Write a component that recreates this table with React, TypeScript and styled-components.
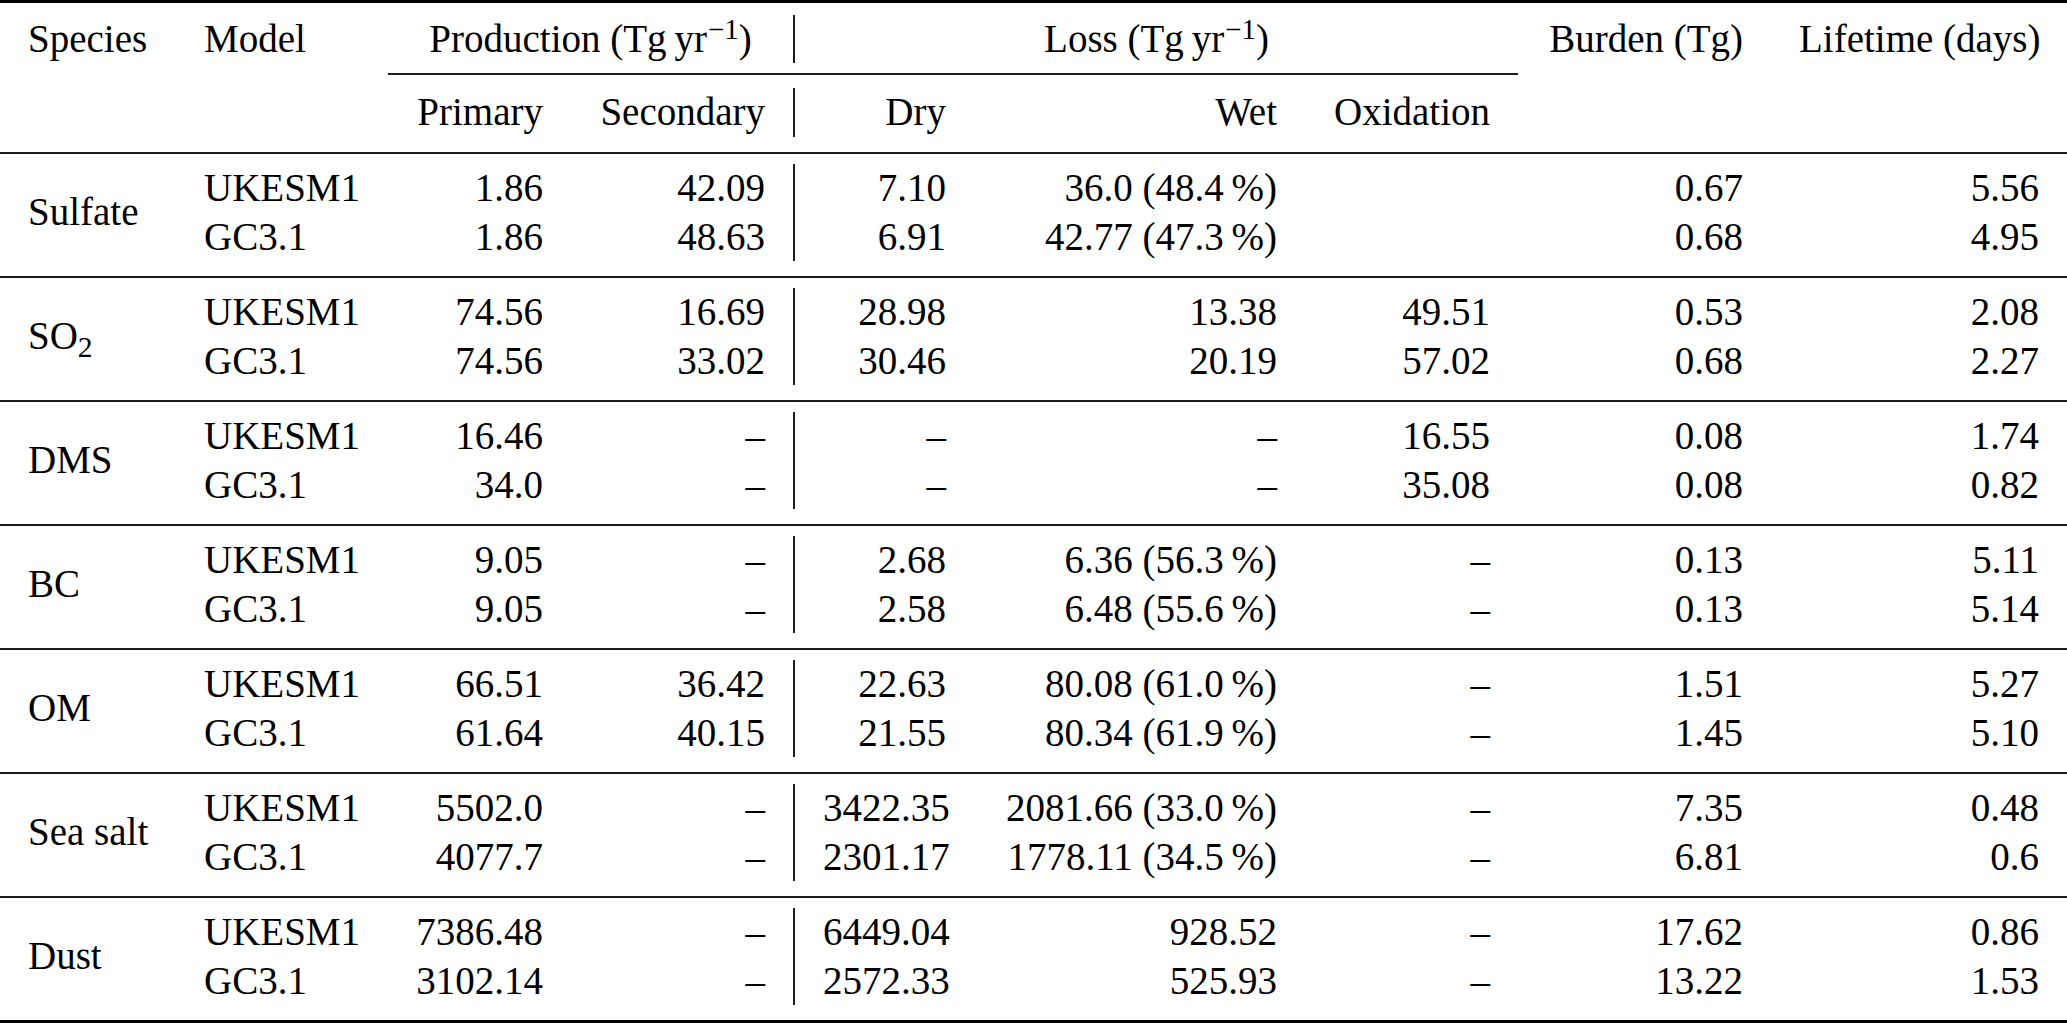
import React from 'react';
import styled, { createGlobalStyle } from 'styled-components';

const COLS = '176px 212px 183px 222px 181px 331px 213px 253px 296px';
const LINE = '48.6px';
const RULE = '#1c1c1c';
const SERIF = `'Liberation Serif', 'Times New Roman', serif`;

const GlobalStyle = createGlobalStyle`
  html, body {
    margin: 0;
    padding: 0;
    background: #fff;
  }
  body {
    font-family: ${SERIF};
    color: #000;
  }
`;

const Table = styled.div`
  width: 2067px;
  font-family: ${SERIF};
  font-size: 39px;
  line-height: ${LINE};
  border-bottom: 3px solid #000;
`;

const Head = styled.div`
  display: grid;
  grid-template-columns: ${COLS};
  grid-template-rows: ${LINE} 25.4px ${LINE};
  padding: 11.5px 0 15px;
  border-top: 3px solid #000;
`;

type Align = 'left' | 'right' | 'center';

const HeadCell = styled.div<{ $col: string; $row: number; $align?: Align; $bar?: boolean }>`
  grid-column: ${(p) => p.$col};
  grid-row: ${(p) => p.$row};
  padding: 0 28px;
  white-space: nowrap;
  text-align: ${(p) => p.$align || 'left'};
  border-left: ${(p) => (p.$bar ? `2px solid ${RULE}` : 'none')};
`;

const CmidRule = styled.div`
  grid-column: 3 / 8;
  grid-row: 2;
  align-self: start;
  margin-top: 10px;
  height: 2px;
  background: ${RULE};
`;

const Group = styled.div`
  display: grid;
  grid-template-columns: ${COLS};
  grid-template-rows: ${LINE} ${LINE};
  padding: 10px 0 14.8px;
  border-top: 2px solid ${RULE};
`;

const Species = styled.div`
  grid-column: 1;
  grid-row: 1 / 3;
  align-self: center;
  padding: 0 28px;
  white-space: nowrap;
`;

const Cell = styled.div<{ $align?: Align; $bar?: boolean }>`
  padding: 0 28px;
  white-space: nowrap;
  text-align: ${(p) => p.$align || 'right'};
  border-left: ${(p) => (p.$bar ? `2px solid ${RULE}` : 'none')};
`;

const Sup = styled.sup`
  font-size: 0.74em;
  line-height: 0;
  vertical-align: 0.42em;
  margin-left: 1px;
`;

const Sub = styled.sub`
  font-size: 0.76em;
  line-height: 0;
  vertical-align: -0.27em;
`;

const perYear = (
  <>
    (Tg{'\u2009'}yr<Sup>−1</Sup>)
  </>
);

type GroupData = { species: React.ReactNode; rows: string[][] };

const pct = (v: string, p: string) => `${v} (${p}\u2009%)`;

const DATA: GroupData[] = [
  {
    species: 'Sulfate',
    rows: [
      ['UKESM1', '1.86', '42.09', '7.10', pct('36.0', '48.4'), '', '0.67', '5.56'],
      ['GC3.1', '1.86', '48.63', '6.91', pct('42.77', '47.3'), '', '0.68', '4.95'],
    ],
  },
  {
    species: (
      <>
        SO<Sub>2</Sub>
      </>
    ),
    rows: [
      ['UKESM1', '74.56', '16.69', '28.98', '13.38', '49.51', '0.53', '2.08'],
      ['GC3.1', '74.56', '33.02', '30.46', '20.19', '57.02', '0.68', '2.27'],
    ],
  },
  {
    species: 'DMS',
    rows: [
      ['UKESM1', '16.46', '–', '–', '–', '16.55', '0.08', '1.74'],
      ['GC3.1', '34.0', '–', '–', '–', '35.08', '0.08', '0.82'],
    ],
  },
  {
    species: 'BC',
    rows: [
      ['UKESM1', '9.05', '–', '2.68', pct('6.36', '56.3'), '–', '0.13', '5.11'],
      ['GC3.1', '9.05', '–', '2.58', pct('6.48', '55.6'), '–', '0.13', '5.14'],
    ],
  },
  {
    species: 'OM',
    rows: [
      ['UKESM1', '66.51', '36.42', '22.63', pct('80.08', '61.0'), '–', '1.51', '5.27'],
      ['GC3.1', '61.64', '40.15', '21.55', pct('80.34', '61.9'), '–', '1.45', '5.10'],
    ],
  },
  {
    species: 'Sea salt',
    rows: [
      ['UKESM1', '5502.0', '–', '3422.35', pct('2081.66', '33.0'), '–', '7.35', '0.48'],
      ['GC3.1', '4077.7', '–', '2301.17', pct('1778.11', '34.5'), '–', '6.81', '0.6'],
    ],
  },
  {
    species: 'Dust',
    rows: [
      ['UKESM1', '7386.48', '–', '6449.04', '928.52', '–', '17.62', '0.86'],
      ['GC3.1', '3102.14', '–', '2572.33', '525.93', '–', '13.22', '1.53'],
    ],
  },
];

const App: React.FC = () => {
  return (
    <>
      <GlobalStyle />
      <Table>
        <Head>
          <HeadCell $col="1" $row={1}>Species</HeadCell>
          <HeadCell $col="2" $row={1}>Model</HeadCell>
          <HeadCell $col="3 / 5" $row={1} $align="center">
            Production {perYear}
          </HeadCell>
          <HeadCell $col="5 / 8" $row={1} $align="center" $bar>
            Loss {perYear}
          </HeadCell>
          <HeadCell $col="8" $row={1} $align="right">Burden (Tg)</HeadCell>
          <HeadCell $col="9" $row={1} $align="right">Lifetime (days)</HeadCell>
          <CmidRule />
          <HeadCell $col="3" $row={3} $align="right">Primary</HeadCell>
          <HeadCell $col="4" $row={3} $align="right">Secondary</HeadCell>
          <HeadCell $col="5" $row={3} $align="right" $bar>Dry</HeadCell>
          <HeadCell $col="6" $row={3} $align="right">Wet</HeadCell>
          <HeadCell $col="7" $row={3} $align="right">Oxidation</HeadCell>
        </Head>
        {DATA.map((g, gi) => (
          <Group key={gi}>
            <Species>{g.species}</Species>
            {g.rows.map((row) =>
              row.map((v, ci) => (
                <Cell key={row[0] + ci} $align={ci === 0 ? 'left' : 'right'} $bar={ci === 3}>
                  {v}
                </Cell>
              ))
            )}
          </Group>
        ))}
      </Table>
    </>
  );
};

export default App;
